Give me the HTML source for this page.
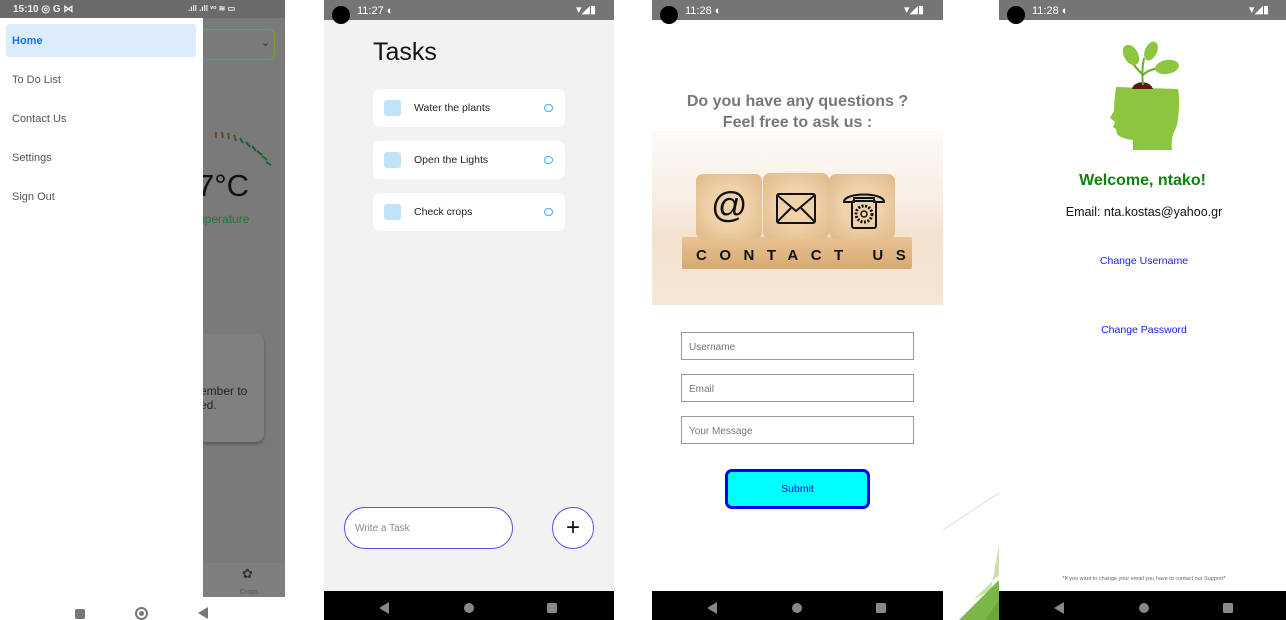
<!DOCTYPE html>
<html><head><meta charset="utf-8"><style>
*{margin:0;padding:0;box-sizing:border-box}
body{width:1286px;height:620px;background:#fff;position:relative;overflow:hidden;font-family:"Liberation Sans",sans-serif}
.a{position:absolute}
.sb{position:absolute;top:0;height:24px;background:#757575;color:#fff;font-size:11px}
.nav{position:absolute;top:591px;height:29px;background:#000}
.dot{position:absolute;width:18px;height:18px;border-radius:50%;background:#000;top:6px}
.task{position:absolute;left:373px;width:192px;height:38px;background:#fff;border-radius:7px;font-size:10.5px;color:#222}
.task .sq{position:absolute;left:11px;top:11px;width:17px;height:16px;background:#bfe3f8;border-radius:3px}
.task .t{position:absolute;left:41px;top:13px}
.task .c{position:absolute;left:171px;top:15px;width:9px;height:8px;border:1.5px solid #4ab0f0;border-radius:4px}
.in{position:absolute;left:681px;width:233px;height:28px;border:1px solid #999;font-size:10px;color:#777;padding:9px 7px}
.menu{position:absolute;left:12px;font-size:11px;color:#555}
</style></head><body>

<!-- Screen 1 -->
<div class="a" style="left:0;top:0;width:285px;height:620px;background:#7a7a7a"></div>
<div class="a" style="left:0;top:0;width:285px;height:18px;background:#6a6a6a;color:#eee;font-size:10px;font-weight:bold"><span class="a" style="left:13px;top:4px">15:10 ◎ G ⋈</span><span class="a" style="left:188px;top:4px;font-size:8px">.ıll .ıll ᵛᵒ ≋ ▭</span></div>
<div class="a" style="left:196px;top:29px;width:79px;height:31px;border:1.5px solid #6fa32a;border-radius:6px"></div>
<div class="a" style="left:261px;top:36px;color:#333;font-size:11px">⌄</div>
<svg class="a" style="left:210px;top:128px" width="65" height="45"><g stroke-width="2"><line x1="6" y1="4" x2="6" y2="10" stroke="#6a4a2a"/><line x1="12" y1="4" x2="13" y2="10" stroke="#5a4a2a"/><line x1="18" y1="5" x2="19" y2="11" stroke="#4a5a2a"/><line x1="24" y1="7" x2="26" y2="13" stroke="#3a5a2a"/><line x1="30" y1="10" x2="33" y2="15" stroke="#2a5a2a"/><line x1="36" y1="14" x2="40" y2="19" stroke="#2a5a2a"/><line x1="42" y1="18" x2="46" y2="23" stroke="#1a5a2a"/><line x1="47" y1="23" x2="52" y2="27" stroke="#1a5a2a"/><line x1="52" y1="28" x2="57" y2="32" stroke="#1a6a2a"/><line x1="56" y1="34" x2="61" y2="37" stroke="#1a6a2a"/></g></svg>
<div class="a" style="left:197px;top:168px;font-size:31px;color:#111">7°C</div>
<div class="a" style="left:198px;top:212px;font-size:12px;color:#1a7a3a">nperature</div>
<div class="a" style="left:180px;top:334px;width:84px;height:108px;background:#808080;border-radius:8px;box-shadow:0 2px 3px rgba(0,0,0,.3)"></div>
<div class="a" style="left:200px;top:384px;font-size:12px;color:#222;line-height:14px">ember to<br>ed.</div>
<div class="a" style="left:200px;top:563px;width:85px;height:34px;background:#7f7f7f"></div>
<div class="a" style="left:242px;top:566px;font-size:13px;color:#333">✿</div>
<div class="a" style="left:240px;top:589px;font-size:7px;color:#555">Crops</div>
<div class="a" style="left:0;top:18px;width:203px;height:602px;background:#fff"></div>
<div class="a" style="left:0;top:597px;width:285px;height:23px;background:#fff"></div>
<div class="a" style="left:75px;top:609px;width:10px;height:10px;background:#777;border-radius:2px"></div>
<div class="a" style="left:135px;top:607px;width:13px;height:13px;border:2px solid #777;border-radius:50%"><div style="margin:2px;width:5px;height:5px;border-radius:50%;background:#777"></div></div>
<div class="a" style="left:198px;top:607px;width:0;height:0;border-top:6px solid transparent;border-bottom:6px solid transparent;border-right:10px solid #777"></div>
<div class="a" style="left:6px;top:24px;width:190px;height:33px;background:#ddecfb;border-radius:3px"></div>
<div class="menu" style="top:35px;color:#1a73e8;font-weight:bold">Home</div>
<div class="menu" style="top:74px">To Do List</div>
<div class="menu" style="top:113px">Contact Us</div>
<div class="menu" style="top:152px">Settings</div>
<div class="menu" style="top:191px">Sign Out</div>

<!-- Screen 2 -->
<div class="a" style="left:324px;top:0;width:290px;height:620px;background:#f2f2f2"></div>
<div class="sb" style="left:324px;width:290px;height:20px"><span class="a" style="left:33px;top:5px">11:27 ◐</span><span class="a" style="left:252px;top:3px">▾◢▮</span></div>
<div class="dot" style="left:332px"></div>
<div class="a" style="left:373px;top:38px;font-size:25px;color:#111">Tasks</div>
<div class="task" style="top:89px"><div class="sq"></div><div class="t">Water the plants</div><div class="c"></div></div>
<div class="task" style="top:141px"><div class="sq"></div><div class="t">Open the Lights</div><div class="c"></div></div>
<div class="task" style="top:193px"><div class="sq"></div><div class="t">Check crops</div><div class="c"></div></div>
<div class="a" style="left:344px;top:507px;width:169px;height:42px;background:#fff;border:1px solid #5555ee;border-radius:21px;font-size:10px;color:#888;padding:15px 10px">Write a Task</div>
<div class="a" style="left:552px;top:507px;width:42px;height:42px;background:#fff;border:1px solid #5555ee;border-radius:50%;text-align:center;font-size:24px;line-height:40px;color:#111">+</div>
<div class="nav" style="left:324px;width:290px"></div>
<div class="a" style="left:379px;top:602px;border-top:6px solid transparent;border-bottom:6px solid transparent;border-right:10px solid #888"></div>
<div class="a" style="left:464px;top:603px;width:10px;height:10px;border-radius:50%;background:#888"></div>
<div class="a" style="left:547px;top:603px;width:10px;height:10px;background:#888;border-radius:1px"></div>

<!-- divider art -->
<svg class="a" style="left:943px;top:480px" width="56" height="140"><line x1="0" y1="50" x2="56" y2="13" stroke="#ddd" stroke-width="1"/><polygon points="56,65 48,110 30,120 56,95" fill="#c8e0a8"/><polygon points="56,100 16,140 56,140" fill="#7ab648"/><polygon points="56,120 42,140 56,140" fill="#6aa838"/></svg>

<!-- Screen 3 -->
<div class="sb" style="left:652px;width:291px;height:20px"><span class="a" style="left:33px;top:5px">11:28 ◐</span><span class="a" style="left:252px;top:3px">▾◢▮</span></div>
<div class="dot" style="left:660px"></div>
<div class="a" style="left:652px;top:91px;width:291px;text-align:center;font-size:16px;font-weight:bold;color:#777;line-height:21px">Do you have any questions ?<br>Feel free to ask us :</div>
<div class="a" style="left:652px;top:131px;width:291px;height:174px;background:linear-gradient(#fcfaf8 0%,#f8eee4 40%,#f3e2cf 60%,#f5e6d6 100%)"></div>
<div class="a" style="left:682px;top:237px;width:230px;height:32px;background:linear-gradient(#e8c394,#d6a972);border-radius:2px"></div>
<div class="a" style="left:696px;top:174px;width:66px;height:65px;background:radial-gradient(circle,#f0d2aa 40%,#e0b888);border-radius:7px"></div>
<div class="a" style="left:763px;top:173px;width:66px;height:66px;background:radial-gradient(circle,#f0d2aa 40%,#e0b888);border-radius:7px"></div>
<div class="a" style="left:829px;top:174px;width:66px;height:65px;background:radial-gradient(circle,#f0d2aa 40%,#e0b888);border-radius:7px"></div>
<div class="a" style="left:711px;top:184px;font-size:36px;color:#111">@</div>
<svg class="a" style="left:776px;top:193px" width="40" height="32"><rect x="1" y="1" width="38" height="29" rx="2" fill="none" stroke="#111" stroke-width="2"/><polyline points="1,2 20,18 39,2" fill="none" stroke="#111" stroke-width="2"/><line x1="1" y1="29" x2="15" y2="15" stroke="#111" stroke-width="2"/><line x1="39" y1="29" x2="25" y2="15" stroke="#111" stroke-width="2"/></svg>
<svg class="a" style="left:841px;top:190px" width="46" height="40"><path d="M3,12 C3,2 43,2 43,12 L33,12 L33,8 L13,8 L13,12Z" fill="none" stroke="#111" stroke-width="2"/><rect x="11" y="11" width="24" height="27" rx="2" fill="none" stroke="#111" stroke-width="2"/><circle cx="23" cy="24" r="8" fill="none" stroke="#111" stroke-width="3" stroke-dasharray="2 1.5"/><circle cx="23" cy="24" r="3" fill="none" stroke="#111" stroke-width="1.5"/></svg>
<div class="a" style="left:696px;top:247px;font-size:15px;font-weight:bold;letter-spacing:12.5px;color:#111">CONTACT&nbsp;US</div>
<div class="in" style="top:332px">Username</div>
<div class="in" style="top:374px">Email</div>
<div class="in" style="top:416px">Your Message</div>
<div class="a" style="left:725px;top:469px;width:145px;height:40px;background:#00ffff;border:3px solid #0000ee;border-radius:7px;text-align:center;line-height:34px;font-size:10.5px;color:#0000ee">Submit</div>
<div class="nav" style="left:652px;width:291px"></div>
<div class="a" style="left:707px;top:602px;border-top:6px solid transparent;border-bottom:6px solid transparent;border-right:10px solid #888"></div>
<div class="a" style="left:792px;top:603px;width:10px;height:10px;border-radius:50%;background:#888"></div>
<div class="a" style="left:876px;top:603px;width:10px;height:10px;background:#888;border-radius:1px"></div>

<!-- Screen 4 -->
<div class="sb" style="left:999px;width:287px;height:20px"><span class="a" style="left:33px;top:5px">11:28 ◐</span><span class="a" style="left:250px;top:3px">▾◢▮</span></div>
<div class="dot" style="left:1007px"></div>
<svg class="a" style="left:1100px;top:40px" width="90" height="120">
<path d="M16,47 L78,49 C80,60 79,80 76,88 C72,95 71,102 72,110 L33,110 L33,100 C25,99 20,97 17,94 L16,89 L13,87 L15,82 L10,78 L14,71 C14,63 15,55 16,47Z" fill="#8cc63f"/>
<path d="M32,49 C34,40 50,40 53,49Z" fill="#5a1a12"/>
<path d="M43,45 C42,35 42,28 44,18 M43,35 C48,30 54,29 60,28 M42,34 C38,30 34,26 31,20" stroke="#6aaa30" stroke-width="2" fill="none"/>
<ellipse cx="31" cy="15" rx="7" ry="11" fill="#8cc63f" transform="rotate(-30 31 15)"/>
<ellipse cx="51" cy="11" rx="6" ry="10" fill="#8cc63f" transform="rotate(25 51 11)"/>
<ellipse cx="67" cy="27" rx="12" ry="7" fill="#8cc63f" transform="rotate(-10 67 27)"/>
</svg>
<div class="a" style="left:999px;top:172px;width:287px;text-align:center;font-size:16px;font-weight:bold;color:#0a850a">Welcome, ntako!</div>
<div class="a" style="left:999px;top:205px;width:290px;text-align:center;font-size:12.5px;color:#111">Email: nta.kostas@yahoo.gr</div>
<div class="a" style="left:999px;top:255px;width:290px;text-align:center;font-size:10.5px;color:#1a1aee">Change Username</div>
<div class="a" style="left:999px;top:324px;width:290px;text-align:center;font-size:10.5px;color:#1a1aee">Change Password</div>
<div class="a" style="left:999px;top:576px;width:290px;text-align:center;font-size:5.5px;color:#666">*If you want to change your email you have to contact our Support*</div>
<div class="nav" style="left:999px;width:287px"></div>
<div class="a" style="left:1054px;top:602px;border-top:6px solid transparent;border-bottom:6px solid transparent;border-right:10px solid #888"></div>
<div class="a" style="left:1139px;top:603px;width:10px;height:10px;border-radius:50%;background:#888"></div>
<div class="a" style="left:1223px;top:603px;width:10px;height:10px;background:#888;border-radius:1px"></div>
</body></html>
